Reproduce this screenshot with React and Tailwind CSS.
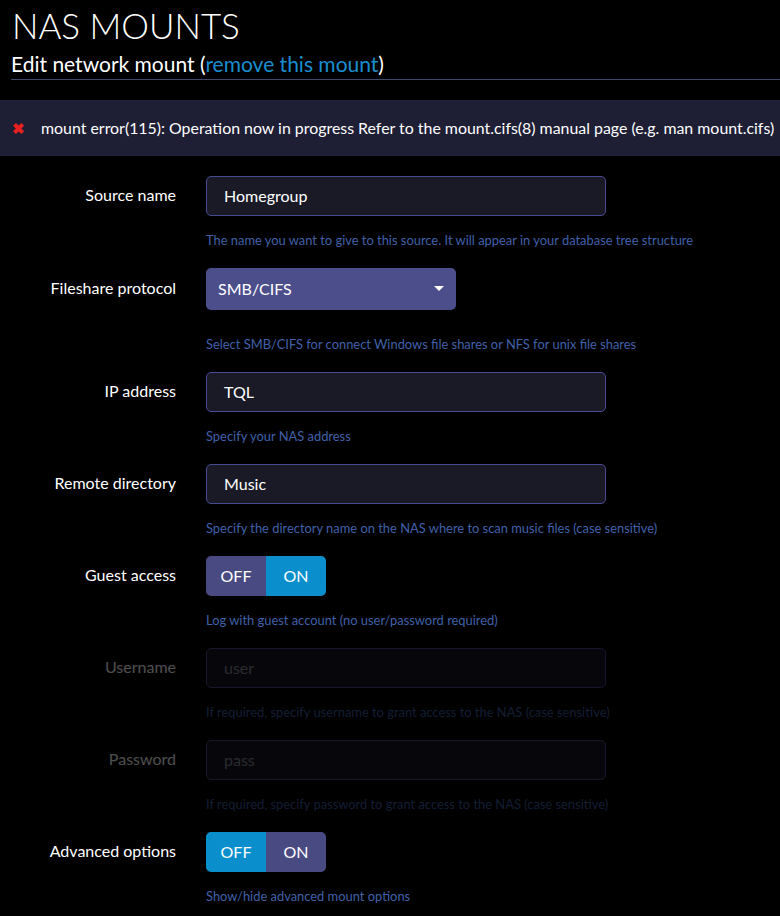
import React from 'react';

function Field({ label, help, children, disabled, tall }) {
  return (
    <div className={`flex ${disabled ? 'opacity-30' : ''}`}>
      <div className={`w-[176px] shrink-0 text-right text-[16px] leading-[22px] text-white ${tall ? 'pt-[9px]' : 'pt-[8px]'}`}>
        {label}
      </div>
      <div className="ml-[30px] flex flex-col">
        {children}
        <div className={`text-[12.9px] text-[#4060a8] ${tall ? 'mt-[26px]' : 'mt-[16px]'} h-[16px] leading-[16px] whitespace-nowrap`}>
          {help}
        </div>
      </div>
    </div>
  );
}

function TextInput({ value, placeholder }) {
  return (
    <div className="w-[400px] h-[40px] rounded-[5px] border border-[#4a4a94] bg-[#191a26] px-[17px] flex items-center text-[16px]">
      {value ? (
        <span className="text-white">{value}</span>
      ) : (
        <span className="text-[#8a8aa0]">{placeholder}</span>
      )}
    </div>
  );
}

function Toggle({ on }) {
  return (
    <div className="flex w-[120px] h-[40px] rounded-[5px] overflow-hidden text-[16px] text-white">
      <div className={`w-[60px] flex items-center justify-center ${on ? 'bg-[#4a4a82]' : 'bg-[#0a8ecc]'}`}>OFF</div>
      <div className={`w-[60px] flex items-center justify-center ${on ? 'bg-[#0a8ecc]' : 'bg-[#4a4a82]'}`}>ON</div>
    </div>
  );
}

export default function App() {
  return (
    <div className="w-[780px] h-[916px] bg-black overflow-hidden" style={{ fontFamily: 'Lato, "Open Sans", sans-serif' }}>
      <div className="pl-[12px] pt-[3px]">
        <h1 className="text-[35px] font-light text-white leading-[44px]">NAS MOUNTS</h1>
        <h2 className="text-[21px] text-white leading-[28px] mt-[3px] -ml-[1px]">
          Edit network mount (<span className="text-[#1a8ed0]">remove this mount</span>)
        </h2>
      </div>
      <div className="ml-[11px] mt-[1px] h-px bg-[#3e4a6e]" />

      <div className="mt-[20px] h-[56px] bg-[#1e1e34] flex items-center text-[15.9px] text-white whitespace-nowrap">
        <span className="ml-[12px] w-[29px] text-[#e82020] font-bold text-[15px]">✖</span>
        <span>mount error(115): Operation now in progress Refer to the mount.cifs(8) manual page (e.g. man mount.cifs)</span>
      </div>

      <div className="mt-[20px] flex flex-col gap-[20px]">
        <Field label="Source name" help="The name you want to give to this source. It will appear in your database tree structure">
          <TextInput value="Homegroup" />
        </Field>

        <Field tall label="Fileshare protocol" help="Select SMB/CIFS for connect Windows file shares or NFS for unix file shares">
          <div className="w-[250px] h-[42px] rounded-[5px] bg-[#4c4e8c] flex items-center justify-between pl-[12px] pr-[12px] text-[16px] text-white">
            <span>SMB/CIFS</span>
            <svg width="10" height="6" viewBox="0 0 10 6"><path d="M0 0h10L5 5z" fill="#fff" /></svg>
          </div>
        </Field>

        <Field label="IP address" help="Specify your NAS address">
          <TextInput value="TQL" />
        </Field>

        <Field label="Remote directory" help="Specify the directory name on the NAS where to scan music files (case sensitive)">
          <TextInput value="Music" />
        </Field>

        <Field label="Guest access" help="Log with guest account (no user/password required)">
          <Toggle on />
        </Field>

        <Field disabled label="Username" help="If required, specify username to grant access to the NAS (case sensitive)">
          <TextInput placeholder="user" />
        </Field>

        <Field disabled label="Password" help="If required, specify password to grant access to the NAS (case sensitive)">
          <TextInput placeholder="pass" />
        </Field>

        <Field label="Advanced options" help="Show/hide advanced mount options">
          <Toggle />
        </Field>
      </div>
    </div>
  );
}
